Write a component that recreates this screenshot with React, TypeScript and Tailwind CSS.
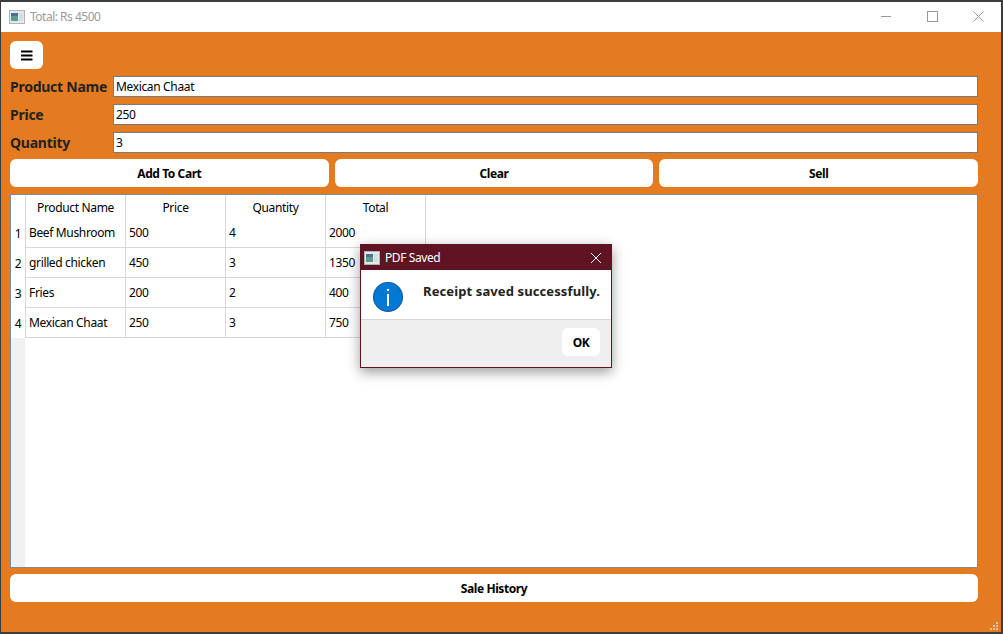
import React from "react";

const rows = [
  ["1", "Beef Mushroom", "500", "4", "2000"],
  ["2", "grilled chicken", "450", "3", "1350"],
  ["3", "Fries", "200", "2", "400"],
  ["4", "Mexican Chaat", "250", "3", "750"],
];

function AppIcon() {
  return (
    <svg width="16" height="14" viewBox="0 0 16 14" className="shrink-0">
      <rect x="0.5" y="0.5" width="15" height="13" fill="#e6e9e9" stroke="#b0b4b4" />
      <rect x="2" y="3" width="7" height="8" fill="#5f9a90" />
      <rect x="2" y="3" width="7" height="3" fill="#4a6f94" />
      <rect x="10" y="3" width="4" height="8" fill="#d6dfdf" />
    </svg>
  );
}

function Field({ label, value }: { label: string; value: string }) {
  return (
    <div className="flex items-start h-[22px]">
      <div className="w-[103px] shrink-0 text-[14px] leading-[22px] font-bold text-[#222] tracking-[-0.25px]">{label}</div>
      <div className="flex-1 h-[21px] bg-white border border-[#7a7a7a] flex items-center px-[2px] text-[12px] text-black tracking-[-0.35px]">
        {value}
      </div>
    </div>
  );
}

function Btn({ children, className = "" }: { children: React.ReactNode; className?: string }) {
  return (
    <button className={`h-[28px] pt-[2px] bg-white rounded-[6px] text-[12px] font-bold text-black tracking-[-0.42px] ${className}`}>
      {children}
    </button>
  );
}

export default function App() {
  return (
    <div
      className="relative w-[1003px] h-[634px] overflow-hidden bg-[#3c3c3c] pt-[2px] pb-[2px] pl-px pr-[2px]"
      style={{ fontFamily: '"Noto Sans", sans-serif' }}
    >
      <div className="h-full flex flex-col">
        <div className="h-[30px] bg-white flex items-center shrink-0">
          <div className="ml-[8px] mr-[5px]"><AppIcon /></div>
          <span className="text-[12px] text-[#9a9a9a] tracking-[-0.5px]">Total: Rs 4500</span>
          <div className="ml-auto flex items-center">
            <svg width="46" height="30" viewBox="0 0 46 30"><path d="M18 14.500H28" stroke="#999" /></svg>
            <svg width="46" height="30" viewBox="0 0 46 30"><rect x="18.500" y="9.500" width="10" height="10" fill="none" stroke="#999" /></svg>
            <svg width="46" height="30" viewBox="0 0 46 30"><path d="M18.500 9.500L28.500 19.500M28.500 9.500L18.500 19.500" stroke="#999" /></svg>
          </div>
        </div>
        <div className="relative flex-1 bg-[#e47b20] pl-[9px] pr-[23px] pt-[9px] flex flex-col">
          <button className="w-[33px] h-[28px] bg-white rounded-[6px] flex items-center justify-center">
            <svg width="12" height="11" viewBox="0 0 12 11"><path d="M0 1.500H11.500M0 5.500H11.500M0 9.500H11.500" stroke="#000" strokeWidth="2" /></svg>
          </button>
          <div className="mt-[7px] flex flex-col gap-[6px]">
            <Field label="Product Name" value="Mexican Chaat" />
            <Field label="Price" value="250" />
            <Field label="Quantity" value="3" />
          </div>
          <div className="mt-[5px] flex gap-[6px]">
            <Btn className="flex-1">Add To Cart</Btn>
            <Btn className="flex-1">Clear</Btn>
            <Btn className="flex-1">Sell</Btn>
          </div>
          <div className="mt-[7px] h-[374px] bg-white border border-[#7f8a99] flex shrink-0 text-[12px] text-black tracking-[-0.35px]">
            <div className="w-[14px] h-full bg-[#f0f0f0] flex flex-col shrink-0">
              <div className="h-[23px] bg-white" />
              {rows.map((r) => (
                <div key={r[0]} className="h-[30px] pt-[2px] bg-white flex items-center justify-center">{r[0]}</div>
              ))}
            </div>
            <div className="flex flex-col">
              <div className="flex h-[23px]">
                {["Product Name", "Price", "Quantity", "Total"].map((h) => (
                  <div key={h} className="w-[100px] border-l border-[#d8d8d8] flex items-center justify-center pt-[2px]">{h}</div>
                ))}
                <div className="border-l border-[#d8d8d8]" />
              </div>
              {rows.map((r) => (
                <div key={r[0]} className="flex h-[30px]">
                  {r.slice(1).map((c, i) => (
                    <div key={i} className="w-[100px] border-l border-b border-[#d8d8d8] flex items-center pl-[3px] pt-px">{c}</div>
                  ))}
                  <div className="border-l border-[#d8d8d8]" />
                </div>
              ))}
            </div>
          </div>
          <Btn className="mt-[6px] w-full shrink-0">Sale History</Btn>
          <div className="absolute right-[3px] bottom-[2px] grid grid-cols-[2px_2px_2px] gap-px w-[8px]">
            {[0, 0, 1, 0, 1, 1, 1, 1, 1].map((v, i) => (
              <div key={i} className={`w-[2px] h-[2px] ${v ? "bg-[#cfc8c0]" : ""}`} />
            ))}
          </div>
        </div>
      </div>

      <div className="absolute left-[360px] top-[244px] w-[252px] h-[124px] bg-white border border-[#5f1323] shadow-[0_4px_12px_rgba(0,0,0,0.4)] flex flex-col">
        <div className="h-[25px] bg-[#5f1323] flex items-center shrink-0 text-white text-[12px] tracking-[-0.4px]">
          <div className="ml-[3px] mr-[5px]"><AppIcon /></div>
          <span>PDF Saved</span>
          <svg className="ml-auto mr-[9px]" width="12" height="12" viewBox="0 0 12 12"><path d="M1 1L11 11M11 1L1 11" stroke="#fff" /></svg>
        </div>
        <div className="h-[49px] flex items-start shrink-0">
          <svg className="ml-[12px] mt-[12px]" width="30" height="30" viewBox="0 0 30 30">
            <circle cx="15" cy="15" r="15" fill="#0078d4" />
            <circle cx="15" cy="15" r="14.500" fill="none" stroke="#1b5f9c" />
            <rect x="14" y="12" width="2" height="12" fill="#fff" />
            <rect x="14" y="7" width="2" height="2" fill="#fff" />
          </svg>
          <span className="ml-[20px] mt-[12px] text-[13px] font-bold text-[#222] leading-[18px] whitespace-nowrap tracking-[0.11px]">Receipt saved successfully.</span>
        </div>
        <div className="flex-1 bg-[#efefef] border-t border-[#d8d8d8] flex justify-end items-start pr-[11px] pt-[8px]">
          <Btn className="w-[38px]">OK</Btn>
        </div>
      </div>
    </div>
  );
}
